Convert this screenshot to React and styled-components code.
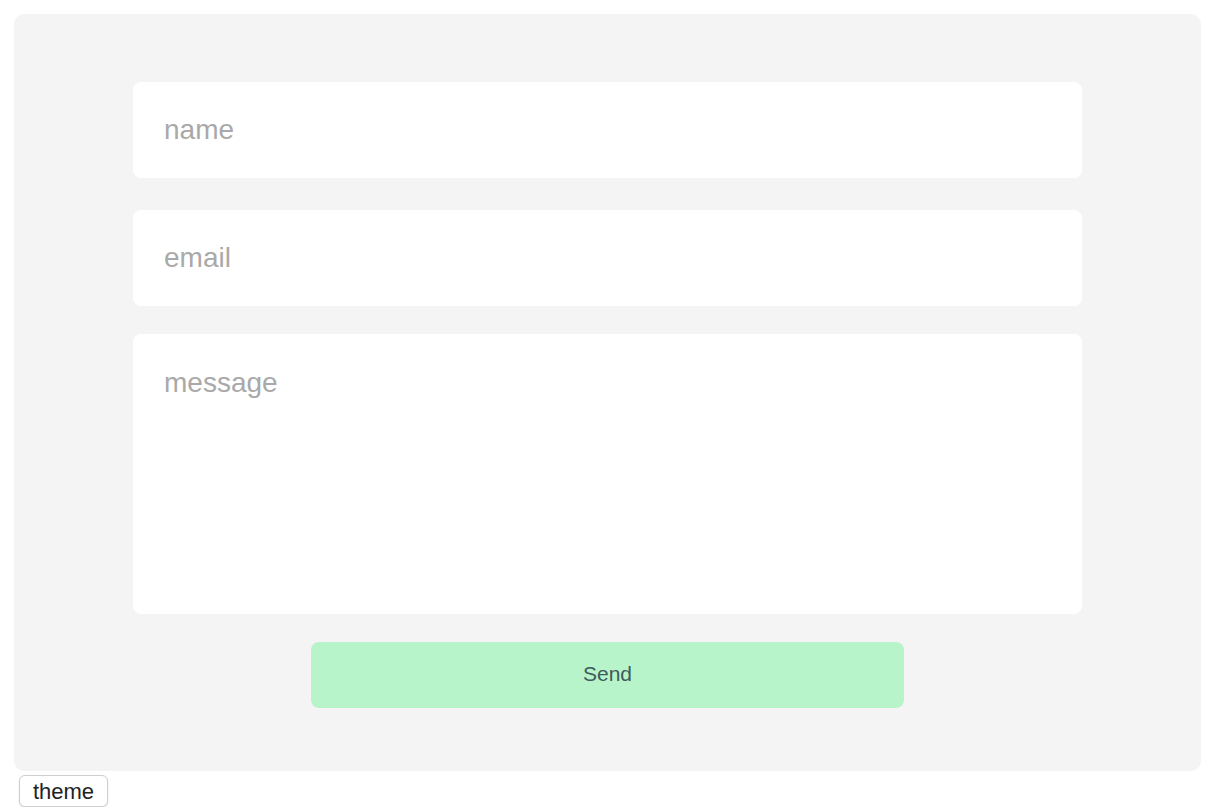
import React from "react";
import styled, { createGlobalStyle } from "styled-components";

const GlobalStyle = createGlobalStyle`
    body {
        margin: 0;
        background: #ffffff;
        font-family: "Liberation Sans", Arial, sans-serif;
    }
`;

function App() {
    return (
        <Page>
            <GlobalStyle />
            <Panel>
                <Form onSubmit={(e) => e.preventDefault()}>
                    <Field type="text" placeholder="name" />
                    <Field type="email" placeholder="email" $gap={32} />
                    <Message placeholder="message" />
                    <SendButton type="submit">Send</SendButton>
                </Form>
            </Panel>
            <ThemeButton>theme</ThemeButton>
        </Page>
    );
}

const Page = styled.div`
    padding: 14px 21px 0 14px;
    display: flex;
    flex-direction: column;
    align-items: flex-start;
`;

const Panel = styled.div`
    align-self: stretch;
    box-sizing: border-box;
    height: 757px;
    padding: 68px 119px 0;
    background-color: #f4f4f4;
    border-radius: 10px;
`;

const Form = styled.form`
    display: flex;
    flex-direction: column;
    align-items: center;
`;

const inputBase = `
    box-sizing: border-box;
    width: 100%;
    border: none;
    outline: none;
    background: #ffffff;
    border-radius: 8px;
    font-family: "Liberation Sans", Arial, sans-serif;
    font-size: 28px;
    color: #333;
    padding: 0 31px;
    &::placeholder {
        color: #a9a9a9;
    }
`;

const Field = styled.input`
    ${inputBase}
    height: 96px;
    margin-top: ${(p) => (p.$gap ? p.$gap + "px" : "0")};
`;

const Message = styled.textarea`
    ${inputBase}
    height: 280px;
    margin-top: 28px;
    padding-top: 33px;
    resize: none;
    line-height: 32px;
`;

const SendButton = styled.button`
    margin-top: 28px;
    width: 593px;
    height: 66px;
    border: none;
    border-radius: 8px;
    background-color: #b7f4ca;
    color: #3f5a5c;
    font-family: "Liberation Sans", Arial, sans-serif;
    font-size: 21px;
    padding: 0 0 3px;
    cursor: pointer;
`;

const ThemeButton = styled.button`
    margin: 4px 0 0 5px;
    width: 89px;
    height: 32px;
    box-sizing: border-box;
    background: #ffffff;
    border: 1px solid #cfcfcf;
    border-radius: 6px;
    box-shadow: 0 1px 2px rgba(0, 0, 0, 0.12);
    color: #222;
    font-family: "Liberation Sans", Arial, sans-serif;
    font-size: 22px;
    padding: 2px 0 0;
    cursor: pointer;
`;

export default App;
